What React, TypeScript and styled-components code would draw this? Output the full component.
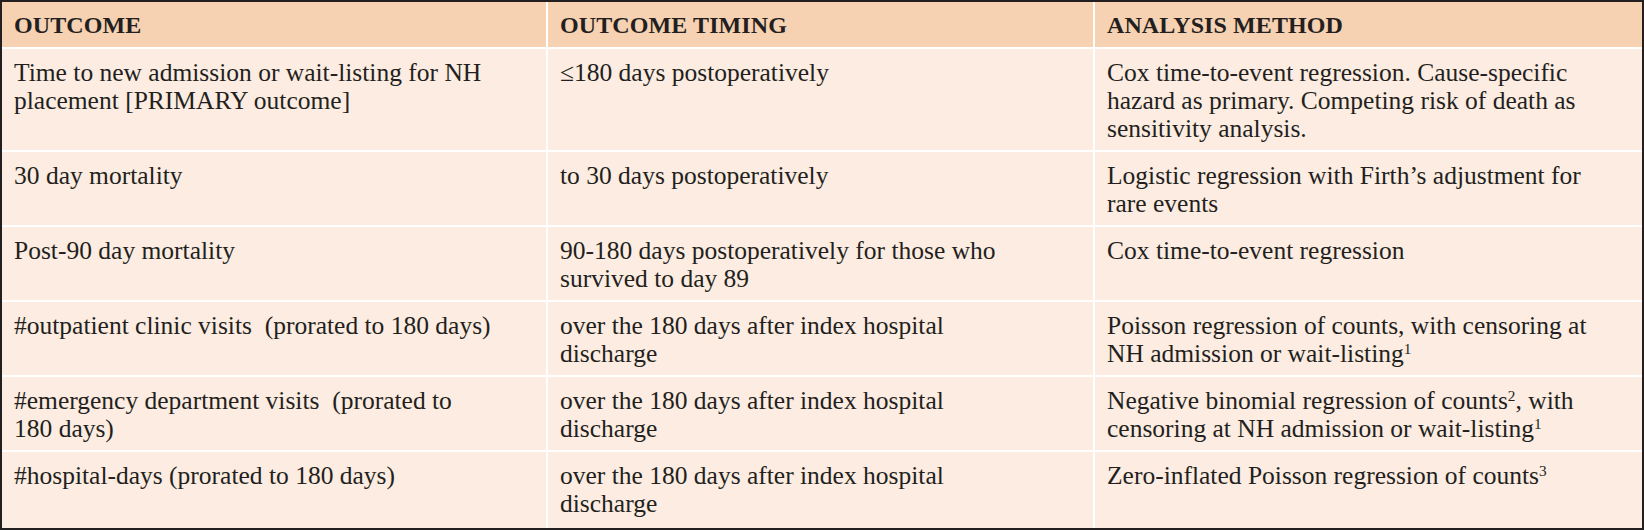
import React from 'react';
import styled, { createGlobalStyle } from 'styled-components';

const GlobalStyle = createGlobalStyle`
  html, body {
    margin: 0;
    padding: 0;
    background: #ffffff;
  }
`;

const Table = styled.div`
  width: 1644px;
  height: 530px;
  box-sizing: border-box;
  display: grid;
  grid-template-columns: 544px 545px 1fr;
  grid-template-rows: 45px repeat(5, auto) 1fr;
  gap: 2px;
  background-color: #ffffff;
  border: 2px solid #231f20;
  font-family: 'Liberation Serif', 'Times New Roman', serif;
  color: #231f20;
`;

const HeaderCell = styled.div`
  background-color: #f6d1b2;
  padding: 8px 12px 7px 12px;
  font-size: 24px;
  line-height: 30px;
  font-weight: bold;
  letter-spacing: 0.1px;
`;

const Cell = styled.div`
  background-color: #fcece1;
  padding: 10px 10px 7px 12px;
  font-size: 25.5px;
  line-height: 28px;
`;

const Sup = styled.sup`
  font-size: 0.6em;
  line-height: 0;
  vertical-align: 0.55em;
`;

const headers = ['OUTCOME', 'OUTCOME TIMING', 'ANALYSIS METHOD'];

type Row = [React.ReactNode, React.ReactNode, React.ReactNode];

const rows: Row[] = [
  [
    <>Time to new admission or wait-listing for NH<br />placement [PRIMARY outcome]</>,
    <>≤180 days postoperatively</>,
    <>
      Cox time-to-event regression. Cause-specific<br />
      hazard as primary. Competing risk of death as<br />
      sensitivity analysis.
    </>,
  ],
  [
    <>30 day mortality</>,
    <>to 30 days postoperatively</>,
    <>Logistic regression with Firth’s adjustment for<br />rare events</>,
  ],
  [
    <>Post-90 day mortality</>,
    <>90-180 days postoperatively for those who<br />survived to day 89</>,
    <>Cox time-to-event regression</>,
  ],
  [
    <>#outpatient clinic visits&nbsp; (prorated to 180 days)</>,
    <>over the 180 days after index hospital<br />discharge</>,
    <>
      Poisson regression of counts, with censoring at<br />
      NH admission or wait-listing<Sup>1</Sup>
    </>,
  ],
  [
    <>#emergency department visits&nbsp; (prorated to<br />180 days)</>,
    <>over the 180 days after index hospital<br />discharge</>,
    <>
      Negative binomial regression of counts<Sup>2</Sup>, with<br />
      censoring at NH admission or wait-listing<Sup>1</Sup>
    </>,
  ],
  [
    <>#hospital-days (prorated to 180 days)</>,
    <>over the 180 days after index hospital<br />discharge</>,
    <>Zero-inflated Poisson regression of counts<Sup>3</Sup></>,
  ],
];

export default function App() {
  return (
    <>
      <GlobalStyle />
      <Table>
        {headers.map((h) => (
          <HeaderCell key={h}>{h}</HeaderCell>
        ))}
        {rows.map((row, i) =>
          row.map((cell, j) => <Cell key={`${i}-${j}`}>{cell}</Cell>)
        )}
      </Table>
    </>
  );
}
